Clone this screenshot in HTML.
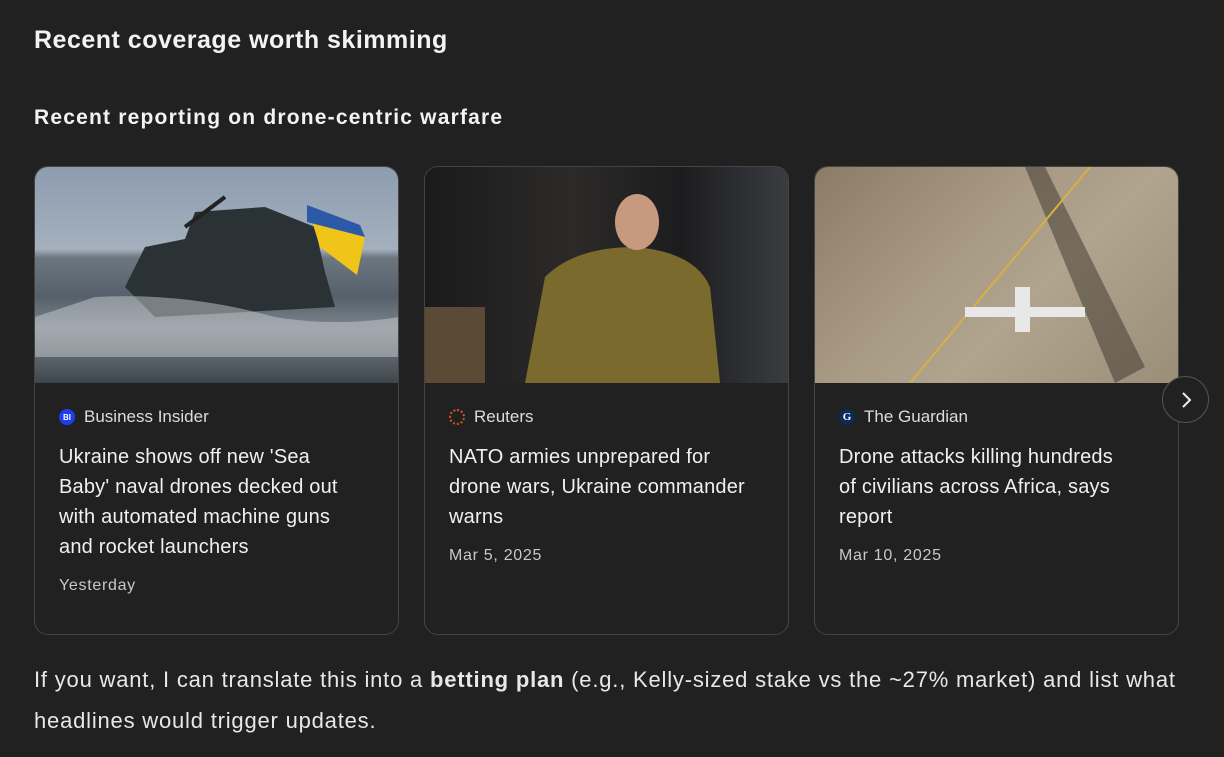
<!DOCTYPE html>
<html><head><style>
*{margin:0;padding:0;box-sizing:border-box}
body{width:1224px;height:757px;background:#212121;color:#ececec;font-family:"Liberation Sans",sans-serif;position:relative;overflow:hidden}
.h1{position:absolute;left:34px;top:26px;font-size:25px;font-weight:bold;color:#f3f3f3;letter-spacing:0.5px}
.h2{position:absolute;left:34px;top:106px;font-size:21px;font-weight:bold;color:#f3f3f3;letter-spacing:1.2px}
.card{position:absolute;top:166px;width:365px;height:469px;border:1px solid #444;border-radius:14px;overflow:hidden;background:#212121}
.img{height:216px;width:100%;position:relative;overflow:hidden}
.src{position:absolute;left:24px;top:240px;font-size:17px;color:#dcdcdc;display:flex;align-items:center;gap:9px}
.ic{width:16px;height:16px;border-radius:50%;display:inline-flex;align-items:center;justify-content:center;font-size:8px;font-weight:bold;color:#fff}
.t{position:absolute;left:24px;top:275px;width:340px;font-size:20px;line-height:30px;color:#f0f0f0;white-space:nowrap;letter-spacing:0.2px}
.d{font-size:16px;color:#c8c8c8;margin-top:14px;line-height:20px;letter-spacing:0.7px}
.nav{position:absolute;left:1162px;top:376px;width:47px;height:47px;border-radius:50%;border:1px solid #555;background:#212121;display:flex;align-items:center;justify-content:center}
.p{position:absolute;left:34px;top:659px;width:1190px;font-size:22px;line-height:41px;color:#e8e8e8;letter-spacing:0.8px;white-space:nowrap}
</style></head><body>
<div class="h1">Recent coverage worth skimming</div>
<div class="h2">Recent reporting on drone-centric warfare</div>

<div class="card" style="left:34px">
<div class="img" style="background:linear-gradient(180deg,#8d9cb0 0%,#a4b0bd 38%,#6c7780 42%,#55606a 60%,#7d868e 75%,#3e464c 100%)">
<svg width="365" height="216" style="position:absolute;left:0;top:0"><path d="M90 120 L110 80 L150 72 L160 45 L230 40 L280 60 L290 105 L300 140 L120 150 Z" fill="#2b3236"/><path d="M150 60 L190 30" stroke="#222" stroke-width="4"/><path d="M272 38 L330 70 L322 108 L285 80 Z" fill="#f0c419"/><path d="M272 38 L325 58 L330 70 L272 55 Z" fill="#2a5aa8"/><path d="M60 130 Q150 125 240 150 Q300 160 365 150 L365 190 L0 190 L0 150 Z" fill="#c8ccd0" opacity="0.5"/></svg></div>
<div class="src"><span class="ic" style="background:#1f3df0">BI</span>Business Insider</div>
<div class="t">Ukraine shows off new 'Sea<br>Baby' naval drones decked out<br>with automated machine guns<br>and rocket launchers<div class="d">Yesterday</div></div>
</div>

<div class="card" style="left:424px">
<div class="img" style="background:linear-gradient(90deg,#1a1a1c 0%,#2c2a28 40%,#1c1c1e 70%,#3a3c40 100%)">
<svg width="365" height="216" style="position:absolute;left:0;top:0"><path d="M100 216 L120 110 Q150 80 210 80 Q270 85 285 120 L295 216 Z" fill="#7a6a2e"/><ellipse cx="212" cy="55" rx="22" ry="28" fill="#c79a80"/><rect x="0" y="140" width="60" height="76" fill="#5a4a36"/></svg></div>
<div class="src"><span class="ic" style="border:2px dotted #e0521f;width:16px;height:16px"></span>Reuters</div>
<div class="t">NATO armies unprepared for<br>drone wars, Ukraine commander<br>warns<div class="d">Mar 5, 2025</div></div>
</div>

<div class="card" style="left:814px">
<div class="img" style="background:linear-gradient(135deg,#8a7c66 0%,#a89a84 40%,#b0a48e 60%,#9a8e78 100%)">
<svg width="365" height="216" style="position:absolute;left:0;top:0"><path d="M230 0 L330 200 L300 216 L210 0Z" fill="#3a342c" opacity="0.5"/><path d="M275 0 L95 216" stroke="#d8b040" stroke-width="2"/><path d="M150 140 L270 140 L270 150 L150 150 Z M200 120 L215 120 L215 165 L200 165Z" fill="#e8e8e8"/></svg></div>
<div class="src"><span class="ic" style="background:#0c2a5c;font-size:11px;font-family:'Liberation Serif',serif">G</span>The Guardian</div>
<div class="t">Drone attacks killing hundreds<br>of civilians across Africa, says<br>report<div class="d">Mar 10, 2025</div></div>
</div>

<div class="nav"><svg width="14" height="20" viewBox="0 0 14 20"><path d="M4 3l7 7-7 7" fill="none" stroke="#eee" stroke-width="2"/></svg></div>

<div class="p">If you want, I can translate this into a <b>betting plan</b> (e.g., Kelly-sized stake vs the ~27% market) and list what<br>headlines would trigger updates.</div>
</body></html>
